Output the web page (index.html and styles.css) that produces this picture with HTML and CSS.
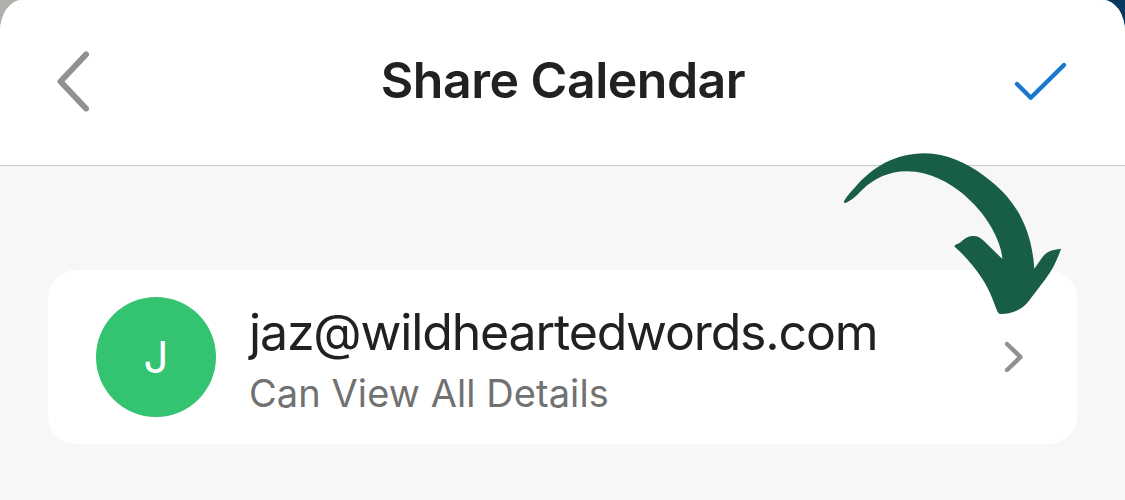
FILE: index.html
```html
<!DOCTYPE html>
<html lang="en">
<head>
  <meta charset="utf-8">
  <title>Share Calendar</title>
  <link rel="stylesheet" href="styles.css">
</head>
<body>
  <div class="sheet">
    <header class="header">
      <svg class="back" viewBox="0 0 40 66" aria-label="Back">
        <path d="M35 6.5 L9.5 33.5 L35 60.5"/>
      </svg>
      <h1 class="title">Share Calendar</h1>
      <svg class="done" viewBox="0 0 56 44" aria-label="Done">
        <path d="M5 24 L18.8 37.8 L52 5"/>
      </svg>
    </header>

    <main class="content">
      <div class="card">
        <div class="avatar">J</div>
        <div class="person">
          <div class="email">jaz@wildheartedwords.com</div>
          <div class="permission">Can View All Details</div>
        </div>
        <svg class="chevron" viewBox="0 0 24 36">
          <path d="M6 5 L19.5 18 L6 31"/>
        </svg>
      </div>
    </main>

    <!-- Arrow pointing at the row's chevron -->
    <svg class="arrow" viewBox="0 0 750 570">
      <path d="M42 184 C48 173 58 160 76 141 C128 81 195 40 285 40 C349 40 410 69 462 107 C551 171 604 255 613 386 L637 352 C650 334 664 330 693 326 C681 363 667 389 646 418 L594 486 C575 509 547 522 511 522 C504 521 502 514 499 507 L486 473 C471 431 430 370 374 320 C372 314 380 313 390 308 C409 291 418 288 431 288 C444 288 451 294 461 302 L517 357 C515 307 474 233 425 186 C374 133 300 94 230 94 C176 94 132 116 96 150 C79 167 69 179 46 189 C43 190 41 187 42 184 Z"/>
    </svg>
  </div>
</body>
</html>
```
FILE: styles.css
```css
* {
  box-sizing: border-box;
}

body {
  margin: 0;
  height: 500px;
  overflow: hidden;
  background: linear-gradient(to right, #b0b0ab 50%, #083860 50%);
  font-family: Inter, "Liberation Sans", sans-serif;
  color: #212121;
}

.sheet {
  position: relative;
  height: 500px;
  background: #f7f7f7;
  border-radius: 22px 22px 0 0 / 32px 32px 0 0;
  overflow: hidden;
}

/* Header bar */
.header {
  display: flex;
  justify-content: space-between;
  height: 166px;
  padding: 48px 57px 0 51px;
  background: #fff;
  border-bottom: 1px solid #c8c8c8;
}

.title {
  margin: 2px 0 0 23px;
  font-size: 50px;
  line-height: 60px;
  font-weight: 600;
  letter-spacing: -0.5px;
  white-space: nowrap;
}

svg {
  fill: none;
  stroke-linecap: round;
  stroke-linejoin: round;
}

.back {
  width: 40px;
  height: 66px;
  stroke: #919191;
  stroke-width: 6;
}

.done {
  width: 56px;
  height: 44px;
  margin: 12px 0 0;
  stroke: #1878d0;
  stroke-width: 4.4;
}

/* Shared person row */
.content {
  padding: 104px 48px 0;
}

.card {
  display: flex;
  align-items: flex-start;
  width: 1029px;
  height: 174px;
  padding: 27px 48px;
  background: #fff;
  border-radius: 28px;
}

.avatar {
  width: 120px;
  height: 120px;
  border-radius: 50%;
  background: #34c371;
  color: #fff;
  font-size: 44px;
  line-height: 121px;
  text-align: center;
}

.person {
  flex: 1;
  margin: 5px 0 0 33px;
  white-space: nowrap;
}

.email {
  font-size: 50px;
  line-height: 60px;
  letter-spacing: -1.15px;
}

.permission {
  font-size: 38px;
  line-height: 62px;
  letter-spacing: 0.08px;
  color: #717171;
}

.chevron {
  width: 24px;
  height: 36px;
  margin: 42px 4px 0 0;
  stroke: #919191;
  stroke-width: 4.4;
}

.arrow {
  position: absolute;
  left: 830px;
  top: 140px;
  width: 250px;
  height: 190px;
  fill: #185e47;
}
```
